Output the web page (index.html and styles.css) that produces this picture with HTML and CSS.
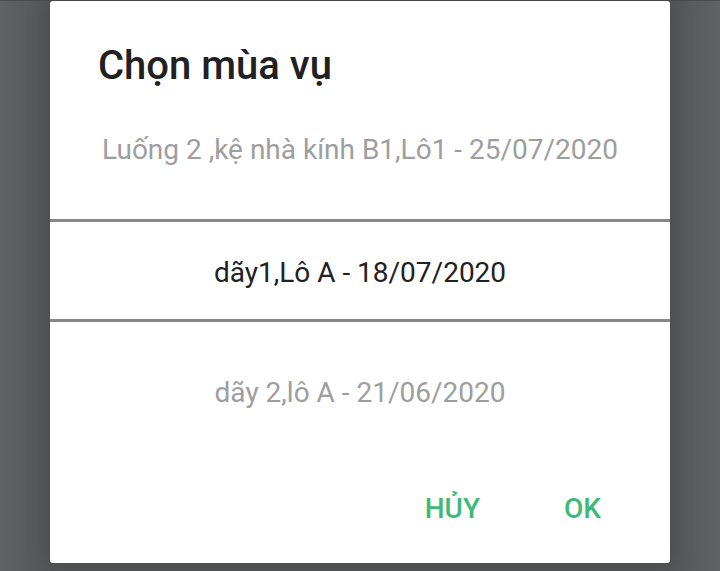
FILE: index.html
```html
<!DOCTYPE html>
<html lang="vi">
<head>
<meta charset="utf-8">
<title>Chọn mùa vụ</title>
<link rel="stylesheet" href="styles.css">
</head>
<body>
<div class="screen">
  <div class="dialog">
    <h1 class="title">Chọn mùa vụ</h1>
    <div class="picker">
      <div class="item item-first">Luống 2 ,kệ nhà kính B1,Lô1 - 25/07/2020</div>
      <div class="divider"></div>
      <div class="item item-selected">dãy1,Lô A - 18/07/2020</div>
      <div class="divider"></div>
      <div class="item item-last">dãy 2,lô A - 21/06/2020</div>
    </div>
    <div class="actions">
      <button class="btn btn-cancel">HỦY</button>
      <button class="btn btn-ok">OK</button>
    </div>
  </div>
</div>
</body>
</html>
```

FILE: styles.css
```css
* { box-sizing: border-box; }
html, body {
  margin: 0;
  padding: 0;
}
body {
  width: 720px;
  height: 571px;
  overflow: hidden;
  background: #5b5f60;
  font-family: Roboto, "Noto Sans", "Liberation Sans", sans-serif;
}
.screen {
  width: 720px;
  height: 571px;
  padding-top: 1px;
  padding-left: 50px;
  background: linear-gradient(to right, #5f6364 0%, #545657 7%, #545657 93%, #5f6364 100%);
  border-top: 1px solid #4a4b4b;
}
.dialog {
  width: 620px;
  height: 562px;
  margin-top: -1px;
  background: #ffffff;
  border-radius: 3px;
  box-shadow: 0 0 24px rgba(0, 0, 0, 0.18);
  display: flex;
  flex-direction: column;
}
.title {
  margin: 0;
  padding: 43px 0 0 48px;
  height: 88px;
  font-size: 40px;
  line-height: 44px;
  font-weight: 500;
  color: #212121;
}
.picker {
  display: flex;
  flex-direction: column;
}
.item {
  text-align: center;
  font-size: 28px;
  line-height: 32px;
  color: #9e9e9e;
  white-space: nowrap;
}
.item-first {
  padding-top: 45px;
  padding-bottom: 53px;
}
.item-selected {
  color: #212121;
  padding-top: 35px;
  padding-bottom: 30px;
}
.item-last {
  padding-top: 55px;
}
.divider {
  height: 3px;
  background: #888888;
}
.actions {
  display: flex;
  justify-content: flex-end;
  gap: 84px;
  padding-top: 84px;
  padding-right: 69px;
}
.btn {
  border: 0;
  background: none;
  padding: 0;
  margin: 0;
  font-family: Roboto, "Noto Sans", "Liberation Sans", sans-serif;
  font-size: 28px;
  line-height: 32px;
  font-weight: 500;
  color: #3dba76;
}
```
